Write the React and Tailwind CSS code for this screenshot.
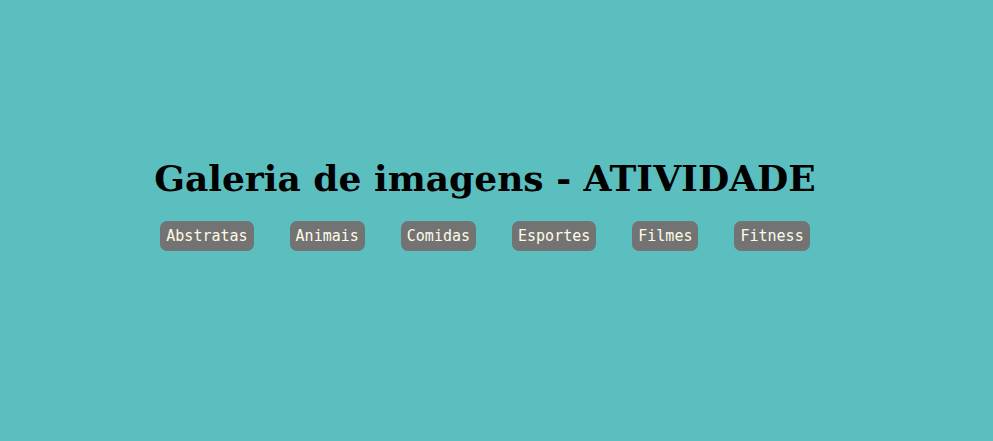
import React from 'react';

const categorias = ['Abstratas', 'Animais', 'Comidas', 'Esportes', 'Filmes', 'Fitness'];

export default function App() {
    return (
        <div className="min-h-[441px] w-full bg-[#5bbfc0] flex flex-col items-center pt-[152px] pr-[23px]">
            <h1
                className="text-[36px] font-bold text-black leading-[52px]"
                style={{ fontFamily: '"DejaVu Serif", serif' }}
            >
                Galeria de imagens - ATIVIDADE
            </h1>
            <div className="flex gap-[36px] mt-[17px]">
                {categorias.map((cat) => (
                    <button
                        key={cat}
                        className="bg-[#737373] text-[#fffbe6] rounded-[7px] px-[6px] h-[30px] text-[15px] leading-none"
                        style={{ fontFamily: '"DejaVu Sans Mono", monospace' }}
                    >
                        {cat}
                    </button>
                ))}
            </div>
        </div>
    );
}
